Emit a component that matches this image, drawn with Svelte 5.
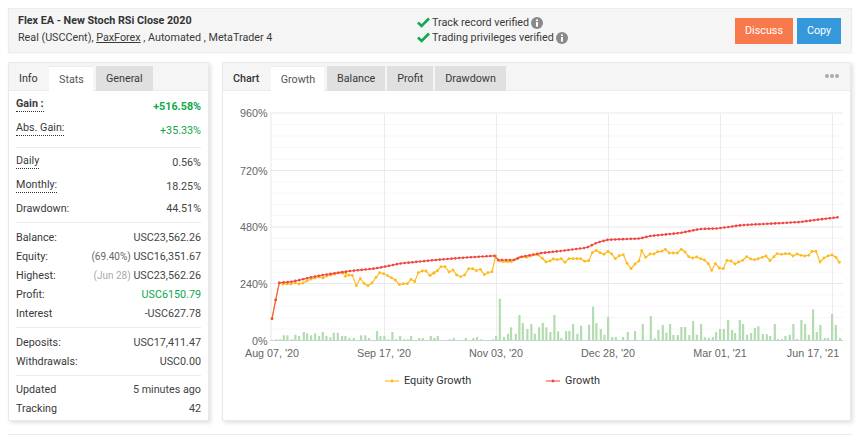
<script>
  // chart data is read off the picture: [x, y] in 3x crop coords, from three crops
  const scale = (origin, pts) => pts.map(([x, y]) => [origin + x / 3, 200 + y / 3]);

  const growthKnots = [
    [272, 318.7], [275.7, 300], [279.3, 282.7], [290, 282], [300, 280], [312, 277], [325, 274.7], [350, 271], [375, 268.5], [383, 267],
    [400, 263.5], [435, 260], [463, 257.7], [495.7, 255.7], [498, 260], [515, 260], [520, 257], [541.7, 253], [563, 250.7],
    [586.7, 247.7], [596.7, 242.7], [608, 239.7], [640, 238.5], [650, 236], [680, 233], [700, 229], [716.7, 228.5],
    [743, 225], [783, 223], [800, 222], [815, 220], [840, 217]
  ];

  // growth markers sit about every 3.9px along the knots
  function sampleGrowth() {
    const out = [];
    for (let x = 272; x <= 840; x += 3.9) {
      let i = growthKnots.findIndex((p, n) => n < growthKnots.length - 1 && x <= growthKnots[n + 1][0]);
      if (i < 0) i = growthKnots.length - 2;
      const [x0, y0] = growthKnots[i];
      const [x1, y1] = growthKnots[i + 1];
      out.push([x, y0 + ((y1 - y0) * (x - x0)) / (x1 - x0)]);
    }
    return out;
  }

  const growth = [...growthKnots.slice(0, 3), ...sampleGrowth().filter((p) => p[0] > 280)];

  const equity = [
    [272, 318.7], [275.7, 300], [279.3, 283], [283, 284], [287, 284], [291, 284], [295, 283], [299, 284], [303, 283], [307, 281],
    [311, 279], [315, 278], [319, 277], [323, 278], [327, 276], [331, 275], [335, 274], [339, 273], [343, 273], [346, 273],
    ...scale(225, [[361,229],[372,225],[382,226],[394,257],[406,236],[417,250],[429,257],[441,249],[453,232],[464,218],[476,221],[488,227],[499,233],[511,240],[523,254],[535,251],[547,251],[558,238],[569,245],[580,218],[592,213],[603,213],[615,226],[627,218]]),
    ...scale(430, [[0,226],[11,220],[22,212],[33,200],[45,200],[57,216],[69,210],[80,225],[92,230],[104,225],[116,206],[128,206],[139,212],[151,208],[163,224],[174,218],[186,215],[197,168],[208,183],[220,185],[232,185],[244,185],[256,178],[268,172],[290,172],[302,168],[325,165],[337,175],[348,186],[360,183],[370,177],[382,179],[394,176],[405,187],[417,176],[429,176],[441,176],[452,176],[464,184],[476,182],[487,158],[499,151],[510,158],[522,163],[534,154],[545,162],[556,176],[568,167],[580,164],[591,190],[603,206],[615,192],[627,183]]),
    ...scale(640, [[5,152],[17,172],[30,162],[42,162],[53,155],[65,154],[76,148],[88,159],[100,159],[112,159],[124,148],[135,156],[146,170],[158,174],[170,171],[182,176],[193,180],[205,191],[215,211],[226,191],[238,204],[250,206],[261,181],[273,183],[285,192],[296,186],[308,181],[320,170],[332,177],[344,179],[355,176],[367,172],[378,168],[390,182],[402,170],[411,161],[424,163],[436,161],[448,161],[459,168],[471,162],[483,166],[494,168],[506,166],[516,154],[528,154],[540,186],[552,174],[564,168],[576,165],[588,172],[598,187]])
  ];

  const bars = [
    ...scale(225, [[153,418],[165,418],[176,406],[187,406],[200,418],[211,404],[222,408],[236,396],[246,400],[258,406],[270,400],[282,408],[293,396],[304,408],[316,412],[326,398],[338,398],[351,408],[361,408],[373,414],[386,414],[408,406],[421,406],[432,414],[456,393],[466,408],[478,408],[490,418],[502,396],[513,418],[525,408],[537,418],[549,418],[558,408],[570,420],[582,414],[593,414],[617,408],[628,414]]),
    ...scale(430, [[12,415],[23,408],[59,418],[71,414],[107,414],[130,414],[141,411],[153,418],[188,418],[198,408],[209,296],[222,411],[234,401],[243,382],[257,401],[268,345],[278,369],[292,387],[304,372],[314,401],[327,382],[338,369],[349,382],[361,396],[373,345],[384,394],[394,414],[408,393],[418,393],[429,372],[442,401],[453,377],[477,374],[489,320],[499,369],[512,387],[523,404],[534,350],[546,411],[557,411],[579,411],[593,396],[615,393]]),
    ...scale(640, [[8,372],[32,348],[44,415],[55,390],[68,375],[79,398],[90,372],[100,405],[113,405],[124,381],[135,381],[148,405],[159,363],[170,404],[183,372],[194,412],[206,414],[218,411],[228,396],[240,387],[251,387],[264,360],[276,390],[285,399],[299,360],[309,372],[321,404],[333,399],[344,384],[355,379],[368,402],[380,403],[390,408],[404,372],[414,417],[426,417],[436,408],[449,404],[460,372],[471,417],[484,360],[495,372],[506,404],[519,328],[530,396],[541,375],[554,414],[564,414],[576,342],[587,375],[600,414]])
  ];

  // svg is placed at page (223, 91), shift coords into it
  const ox = 223;
  const oy = 91;
  const pts = (list) => list.map(([x, y]) => `${(x - ox).toFixed(1)},${(y - oy).toFixed(1)}`).join(' ');

  const majors = [
    { y: 113, label: '960%' },
    { y: 170.5, label: '720%' },
    { y: 227, label: '480%' },
    { y: 283.5, label: '240%' },
    { y: 340.5, label: '0%' }
  ];
  const minors = [];
  for (let i = 0; i < 4; i++) {
    for (let k = 1; k < 5; k++) minors.push(majors[i].y + ((majors[i + 1].y - majors[i].y) * k) / 5);
  }
  const xTicks = [
    { x: 272, label: "Aug 07, '20" },
    { x: 384, label: "Sep 17, '20" },
    { x: 496, label: "Nov 03, '20" },
    { x: 608, label: "Dec 28, '20" },
    { x: 720, label: "Mar 01, '21" },
    { x: 832, label: "Jun 17, '21" }
  ];
</script>

{#snippet check()}
  <svg class="check" width="13" height="11" viewBox="0 0 13 11"><path d="M1 5.5 L4.6 9 L12 1.5" fill="none" stroke="#13a84f" stroke-width="2.6" /></svg>
{/snippet}

{#snippet info()}
  <svg class="info" width="12" height="12" viewBox="0 0 12 12">
    <circle cx="6" cy="6" r="6" fill="#8a8a8a" />
    <rect x="5" y="5" width="2" height="4.6" fill="#fff" />
    <rect x="5" y="2.4" width="2" height="1.7" fill="#fff" />
  </svg>
{/snippet}

<div class="page">
  <header class="top box">
    <div class="title">
      <div class="name">Flex EA - New Stoch RSi Close 2020</div>
      <div>Real (USCCent), <span class="link">PaxForex</span> , Automated , MetaTrader 4</div>
    </div>
    <div class="verified">
      <div class="v-row">{@render check()}<span>Track record verified</span>{@render info()}</div>
      <div class="v-row">{@render check()}<span>Trading privileges verified</span>{@render info()}</div>
    </div>
    <div class="actions">
      <button class="btn discuss">Discuss</button>
      <button class="btn copy">Copy</button>
    </div>
  </header>

  <div class="columns">
    <section class="panel stats">
      <nav class="tabs">
        <span class="tab plain info-tab">Info</span>
        <span class="tab active stats-tab">Stats</span>
        <span class="tab idle general-tab">General</span>
      </nav>
      <div class="stats-body">
        <div class="row gain"><span class="lbl dot bold">Gain :</span><span class="val up bold">+516.58%</span></div>
        <div class="row abs"><span class="lbl dot">Abs. Gain:</span><span class="val up">+35.33%</span></div>
        <hr class="loose" />
        <div class="row daily"><span class="lbl dot">Daily</span><span class="val">0.56%</span></div>
        <div class="row monthly"><span class="lbl dot">Monthly:</span><span class="val">18.25%</span></div>
        <div class="row"><span class="lbl">Drawdown:</span><span class="val">44.51%</span></div>
        <hr />
        <div class="row"><span class="lbl">Balance:</span><span class="val">USC23,562.26</span></div>
        <div class="row"><span class="lbl">Equity:</span><span class="val"><small class="pct">(69.40%)</small> USC16,351.67</span></div>
        <div class="row"><span class="lbl">Highest:</span><span class="val"><small class="date">(Jun 28)</small> USC23,562.26</span></div>
        <div class="row"><span class="lbl">Profit:</span><span class="val up">USC6150.79</span></div>
        <div class="row"><span class="lbl">Interest</span><span class="val">-USC627.78</span></div>
        <hr />
        <div class="row"><span class="lbl">Deposits:</span><span class="val">USC17,411.47</span></div>
        <div class="row"><span class="lbl">Withdrawals:</span><span class="val">USC0.00</span></div>
        <hr class="tight" />
        <div class="row"><span class="lbl">Updated</span><span class="val">5 minutes ago</span></div>
        <div class="row"><span class="lbl">Tracking</span><span class="val">42</span></div>
      </div>
    </section>

    <section class="panel chart">
      <nav class="tabs">
        <span class="tab plain chart-tab">Chart</span>
        <span class="tab active growth-tab">Growth</span>
        <span class="tab idle">Balance</span>
        <span class="tab idle">Profit</span>
        <span class="tab idle">Drawdown</span>
        <span class="more"><i></i><i></i><i></i></span>
      </nav>
      <svg class="plot" width="627" height="328" viewBox="0 0 627 328">
        {#each minors as y}
          <line x1="49" x2="620" y1={y - oy} y2={y - oy} stroke="#f6f6f6" />
        {/each}
        <rect x="47" y={113 - oy} width="2" height="228" fill="#f3f3f3" />
        {#each xTicks.slice(1) as t}
          <line x1={t.x - ox + 0.5} x2={t.x - ox + 0.5} y1={113 - oy} y2={341 - oy} stroke="#ececec" />
        {/each}
        {#each majors as m}
          <line x1="47" x2="620" y1={m.y - oy} y2={m.y - oy} stroke={m.y > 340 ? '#c5d5e2' : '#e9e9e9'} />
          <text class="axis" x="44.5" y={m.y - oy + 4} text-anchor="end">{m.label}</text>
        {/each}
        {#each bars as [x, y]}
          <rect x={(x - ox - 1).toFixed(1)} y={(y - oy).toFixed(1)} width="2.2" height={(340.5 - y).toFixed(1)} fill="#b3dcb0" />
        {/each}
        <polyline points={pts(equity)} fill="none" stroke="#fdbb2a" stroke-width="1.2" />
        {#each equity as [x, y]}
          <circle cx={x - ox} cy={y - oy} r="1.4" fill="#fdbb1c" />
        {/each}
        <polyline points={pts(growth)} fill="none" stroke="#f0604a" stroke-width="1.2" />
        {#each growth as [x, y]}
          <circle cx={x - ox} cy={y - oy} r="1.3" fill="#f04545" />
        {/each}
        {#each xTicks as t, i}
          <text class="axis" x={t.x - ox - (i === 5 ? 19 : 0)} y={357 - oy} text-anchor="middle">{t.label}</text>
        {/each}
        <line x1="162" x2="176" y1="290" y2="290" stroke="#fdbb2a" stroke-width="1.2" />
        <circle cx="169" cy="290" r="1.4" fill="#fdbb1c" />
        <text class="legend" x="181" y="293">Equity Growth</text>
        <line x1="323" x2="337" y1="290" y2="290" stroke="#f0604a" stroke-width="1.2" />
        <circle cx="330" cy="290" r="1.4" fill="#f04545" />
        <text class="legend" x="342" y="293">Growth</text>
      </svg>
    </section>
  </div>

  <div class="box footer-stub"></div>
</div>

<style>
  :global(body) {
    margin: 0;
    background: #fff;
    overflow: hidden;
  }

  .page {
    width: 864px;
    height: 435px;
    box-sizing: border-box;
    padding: 8px 12px 0 8px;
    font-family: Roboto, "Liberation Sans", sans-serif;
    font-size: 10.75px;
    color: #3a3a3a;
    overflow: hidden;
  }

  .box {
    background: #f5f5f5;
    border: 1px solid #ececec;
    box-sizing: border-box;
  }

  .top {
    height: 45px;
    display: flex;
    align-items: center;
    padding: 0 10px 0 9px;
    box-shadow: 0 1px 2px rgba(0, 0, 0, 0.04);
  }

  .title {
    width: 399px;
    line-height: 17px;
    margin-top: -3px;
  }

  .name {
    font-weight: 700;
    color: #333;
  }

  .link {
    text-decoration: underline;
  }

  .verified {
    line-height: 15px;
    margin-top: -1px;
  }

  .v-row {
    display: flex;
    align-items: center;
    gap: 2px;
  }

  .check {
    flex: none;
  }

  .info {
    margin-left: 0;
  }

  .actions {
    margin-left: auto;
    display: flex;
    gap: 4px;
  }

  .btn {
    height: 26px;
    border: 0;
    padding: 0;
    color: #fff;
    font: inherit;
  }

  .discuss {
    width: 58px;
    background: #f8794b;
  }

  .copy {
    width: 44px;
    background: #3498db;
  }

  .columns {
    display: flex;
    gap: 13px;
    margin-top: 9px;
  }

  .panel {
    height: 359px;
    background: #fff;
    border: 1px solid #e9e9e9;
    box-sizing: border-box;
    box-shadow: 2px 2px 4px rgba(0, 0, 0, 0.12);
  }

  .stats {
    width: 201px;
  }

  .chart {
    width: 629px;
  }

  .tabs {
    height: 28px;
    box-sizing: border-box;
    padding-top: 3px;
    display: flex;
    gap: 2px;
    background: #f5f5f5;
    border-bottom: 1px solid #ececec;
  }

  .tab {
    height: 25px;
    line-height: 25px;
    box-sizing: border-box;
    padding: 0 10px;
    margin-bottom: -1px;
  }

  .plain {
    color: #333;
  }

  .info-tab {
    width: 40px;
    margin-right: -2px;
  }

  .stats-tab {
    width: 44px;
    padding: 0 0 0 1px;
    text-align: center;
    margin-right: 1px;
  }

  .active {
    background: #fff;
    border-top: 1px solid #ececec;
    color: #555;
  }

  .idle {
    background: #e0e0e0;
  }

  .chart-tab {
    width: 48px;
    font-weight: 500;
    margin-right: -2px;
  }

  .growth-tab {
    width: 53px;
    padding: 0 0 0 1px;
    text-align: center;
    margin-right: 1px;
  }

  .more {
    margin-left: auto;
    margin-right: 11px;
    display: flex;
    gap: 1px;
    align-items: center;
    height: 19px;
  }

  .more i {
    width: 4px;
    height: 4px;
    border-radius: 50%;
    background: #aaa;
  }

  .stats-body {
    padding: 6px 7px 0;
    display: flex;
    flex-direction: column;
  }

  .row {
    display: flex;
    justify-content: space-between;
    align-items: center;
    height: 19px;
  }

  .lbl {
    color: #3a3a3a;
  }

  .dot {
    border-bottom: 1px dotted #333;
    line-height: 14px;
  }

  .bold {
    font-weight: 700;
  }

  .val {
    color: #444;
  }

  .up {
    color: #0ca84c;
  }

  .gain {
    height: 24px;
    align-items: flex-start;
  }

  .gain .val {
    margin-top: 3px;
  }

  .abs {
    height: 22px;
    align-items: flex-start;
  }

  .abs .val {
    margin-top: 3px;
  }

  .daily {
    height: 24px;
    align-items: flex-start;
  }

  .monthly {
    height: 21px;
    align-items: flex-start;
  }

  .daily .val,
  .monthly .val {
    margin-top: 2px;
  }

  small {
    font-size: 10px;
  }

  .pct {
    color: #666;
  }

  .date {
    color: #aaa;
  }

  hr {
    width: 100%;
    margin: 4px 0 5px;
    border: 0;
    border-top: 1px solid #ececec;
  }

  hr.loose {
    margin-bottom: 6px;
  }

  hr.tight {
    margin-bottom: 4px;
  }

  .plot {
    display: block;
  }

  .axis {
    font-family: "Liberation Sans", Arial, sans-serif;
    font-size: 10.75px;
    fill: #666;
  }

  .legend {
    font-family: Roboto, "Liberation Sans", sans-serif;
    font-size: 10.9px;
    fill: #333;
  }

  .footer-stub {
    height: 20px;
    margin-top: 13px;
  }
</style>
